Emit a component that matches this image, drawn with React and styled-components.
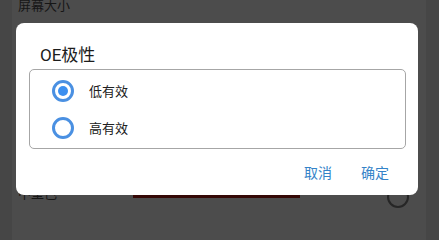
import React, { useState } from 'react'
import styled, { createGlobalStyle } from 'styled-components'

const GlobalStyle = createGlobalStyle`
    html, body {
        margin: 0;
        padding: 0;
        height: 100%;
        overflow: hidden;
        background: #4b4b4b;
        font-family: Roboto, "Noto Sans CJK SC", sans-serif;
    }

    #root {
        height: 100%;
    }
`

const StyledScreen = styled.div`
    position: relative;
    width: 100%;
    height: 100%;
    min-height: 224px;
    display: flex;
    overflow: hidden;
`

const StyledEdge = styled.div`
    width: ${(props) => props.width}px;
    background: #464646;
`

const StyledPage = styled.div`
    flex: 1;
    display: flex;
    flex-direction: column;
    background: #4c4c4c;
`

const StyledSettingRow = styled.div`
    display: flex;
    align-items: center;
    height: ${(props) => props.height}px;
    padding: 0 17px 0 6px;
    margin-top: ${(props) => props.offset || 0}px;
`

const StyledSettingLabel = styled.span`
    font-size: 13px;
    color: #161616;
    width: 115px;
`

const StyledColorBar = styled.div`
    width: 167px;
    height: 4px;
    background: #350806;
    margin-top: 8px;
`

const StyledGhostRadio = styled.div`
    width: 18px;
    height: 18px;
    border: 2px solid #262626;
    border-radius: 50%;
    margin-left: auto;
    margin-top: 10px;
`

const StyledDialog = styled.div`
    position: absolute;
    left: 16px;
    top: 23px;
    width: 402px;
    height: 172px;
    box-sizing: border-box;
    background: #ffffff;
    border-radius: 8px;
    display: flex;
    flex-direction: column;
    padding: 0 12px 0 13px;
`

const StyledTitle = styled.h2`
    margin: 0;
    padding: 20px 0 0 11px;
    height: 26px;
    font-size: 17px;
    font-weight: 400;
    line-height: 24px;
    color: #1c1c1c;
`

const StyledOptionBox = styled.div`
    border: 1px solid #a6a6a6;
    border-radius: 5px;
    padding: 2px 0;
    display: flex;
    flex-direction: column;
`

const StyledOption = styled.label`
    display: flex;
    align-items: center;
    height: 37px;
    padding-left: 22px;
    gap: 15px;
    cursor: pointer;
`

const StyledRadio = styled.span`
    width: 22px;
    height: 22px;
    box-sizing: border-box;
    border: 3px solid #4a90e2;
    border-radius: 50%;
    display: flex;
    align-items: center;
    justify-content: center;

    &::after {
        content: '';
        width: 10px;
        height: 10px;
        border-radius: 50%;
        background: ${(props) => (props.checked ? '#3b8ff0' : 'transparent')};
    }
`

const StyledOptionText = styled.span`
    font-size: 13px;
    color: #202020;
`

const StyledActions = styled.div`
    display: flex;
    justify-content: flex-end;
    align-items: center;
    gap: 29px;
    flex: 1;
    padding: 0 17px 0 0;
`

const StyledActionButton = styled.button`
    border: none;
    background: none;
    padding: 0;
    font-family: inherit;
    font-size: 14px;
    color: #3483c8;
    cursor: pointer;
`

const options = ['低有效', '高有效']

const App = () => {
    const [selected, setSelected] = useState(0)

    return (
        <StyledScreen>
            <GlobalStyle />
            <StyledEdge width={12} />
            <StyledPage>
                <StyledSettingRow height={12} offset={-2}>
                    <StyledSettingLabel>屏幕大小</StyledSettingLabel>
                </StyledSettingRow>
                <StyledSettingRow height={24} offset={170}>
                    <StyledSettingLabel>中型色</StyledSettingLabel>
                    <StyledColorBar />
                    <StyledGhostRadio />
                </StyledSettingRow>
            </StyledPage>
            <StyledEdge width={13} />

            <StyledDialog>
                <StyledTitle>OE极性</StyledTitle>
                <StyledOptionBox>
                    {options.map((option, index) => (
                        <StyledOption
                            key={option}
                            onClick={() => setSelected(index)}
                        >
                            <StyledRadio checked={selected === index} />
                            <StyledOptionText>{option}</StyledOptionText>
                        </StyledOption>
                    ))}
                </StyledOptionBox>
                <StyledActions>
                    <StyledActionButton>取消</StyledActionButton>
                    <StyledActionButton>确定</StyledActionButton>
                </StyledActions>
            </StyledDialog>
        </StyledScreen>
    )
}

export default App
